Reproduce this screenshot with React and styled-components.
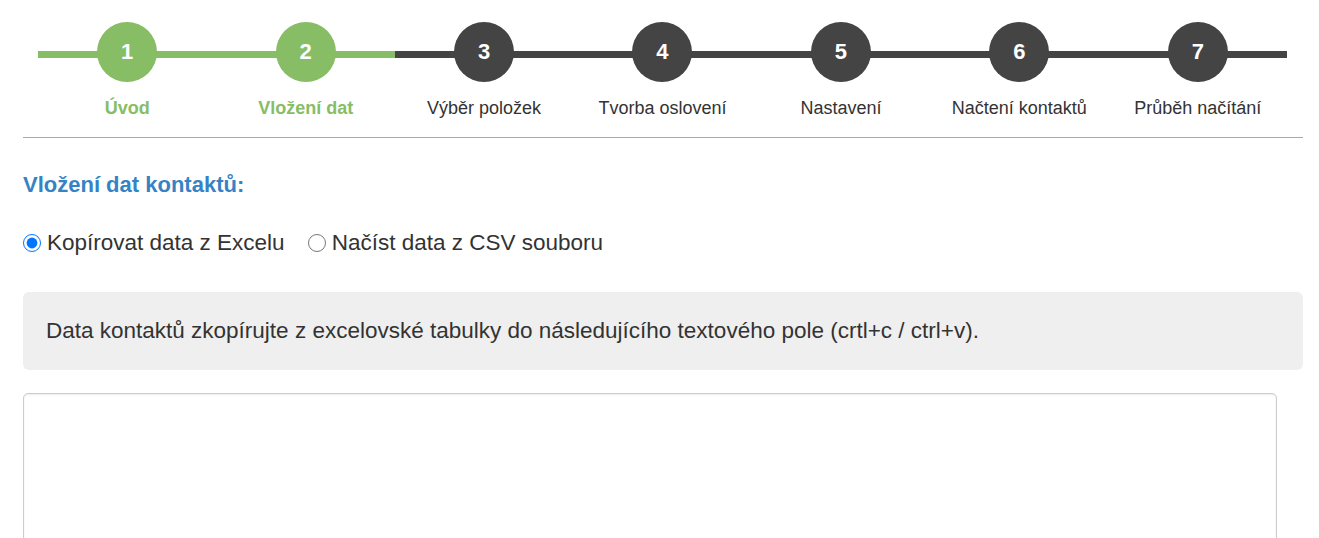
import React, { useState } from "react";
import styled, { createGlobalStyle } from "styled-components";

const GlobalStyle = createGlobalStyle`
  html, body {
    margin: 0;
    padding: 0;
    background: #fff;
    font-family: "Liberation Sans", Arial, sans-serif;
    color: #333;
  }
`;

const Page = styled.div`
  padding: 22px 16px 0 23px;
`;

const Stepper = styled.div`
  display: grid;
  grid-template-columns: repeat(7, 1fr);
  margin: 0 16px 0 15px;
`;

const Step = styled.div`
  display: flex;
  flex-direction: column;
  align-items: center;
  position: relative;
`;

const Track = styled.div`
  position: absolute;
  left: 0;
  right: 0;
  top: 29px;
  height: 7px;
  background: ${({ $done }) => ($done ? "#87bd64" : "#444")};
`;

const Circle = styled.div`
  position: relative;
  width: 60px;
  height: 60px;
  border-radius: 50%;
  background: ${({ $done }) => ($done ? "#87bd64" : "#444")};
  color: #fff;
  font-weight: bold;
  font-size: 22px;
  display: flex;
  align-items: center;
  justify-content: center;
`;

const StepLabel = styled.div`
  margin-top: 16px;
  font-size: 18px;
  line-height: 21px;
  color: ${({ $done }) => ($done ? "#87bd64" : "#333")};
  font-weight: ${({ $done }) => ($done ? "bold" : "normal")};
`;

const Rule = styled.hr`
  border: none;
  border-top: 1px solid #aaa;
  margin: 18px 0 0;
`;

const Heading = styled.h3`
  margin: 34px 0 0;
  font-size: 22px;
  line-height: 26px;
  font-weight: bold;
  color: #3583c4;
`;

const RadioRow = styled.div`
  display: flex;
  align-items: center;
  gap: 23px;
  margin-top: 32px;
  font-size: 22.5px;
  line-height: 26px;
`;

const RadioLabel = styled.label`
  display: flex;
  align-items: center;
  gap: 6px;
  cursor: pointer;

  input {
    margin: 0;
    width: 18px;
    height: 18px;
  }
`;

const InfoBox = styled.div`
  margin-top: 36px;
  background: #efefef;
  border-radius: 6px;
  padding: 26px 23px 26px;
  font-size: 22.5px;
  line-height: 26px;
`;

const TextArea = styled.textarea`
  display: block;
  box-sizing: border-box;
  margin-top: 23px;
  width: 1254px;
  height: 200px;
  border: 1px solid #ccc;
  border-radius: 5px;
  box-shadow: inset 0 1px 2px rgba(0, 0, 0, 0.08);
  resize: none;
  font-family: inherit;
  font-size: 16px;
`;

const steps = [
  "Úvod",
  "Vložení dat",
  "Výběr položek",
  "Tvorba oslovení",
  "Nastavení",
  "Načtení kontaktů",
  "Průběh načítání",
];

const App = () => {
  const [source, setSource] = useState("excel");
  const current = 2;

  return (
    <Page>
      <GlobalStyle />
      <Stepper>
        {steps.map((label, i) => (
          <Step key={label}>
            <Track $done={i < current} />
            <Circle $done={i < current}>{i + 1}</Circle>
            <StepLabel $done={i < current}>{label}</StepLabel>
          </Step>
        ))}
      </Stepper>
      <Rule />
      <Heading>Vložení dat kontaktů:</Heading>
      <RadioRow>
        <RadioLabel>
          <input
            type="radio"
            name="source"
            checked={source === "excel"}
            onChange={() => setSource("excel")}
          />
          Kopírovat data z Excelu
        </RadioLabel>
        <RadioLabel>
          <input
            type="radio"
            name="source"
            checked={source === "csv"}
            onChange={() => setSource("csv")}
          />
          Načíst data z CSV souboru
        </RadioLabel>
      </RadioRow>
      <InfoBox>
        Data kontaktů zkopírujte z excelovské tabulky do následujícího textového pole (crtl+c / ctrl+v).
      </InfoBox>
      <TextArea />
    </Page>
  );
};

export default App;
